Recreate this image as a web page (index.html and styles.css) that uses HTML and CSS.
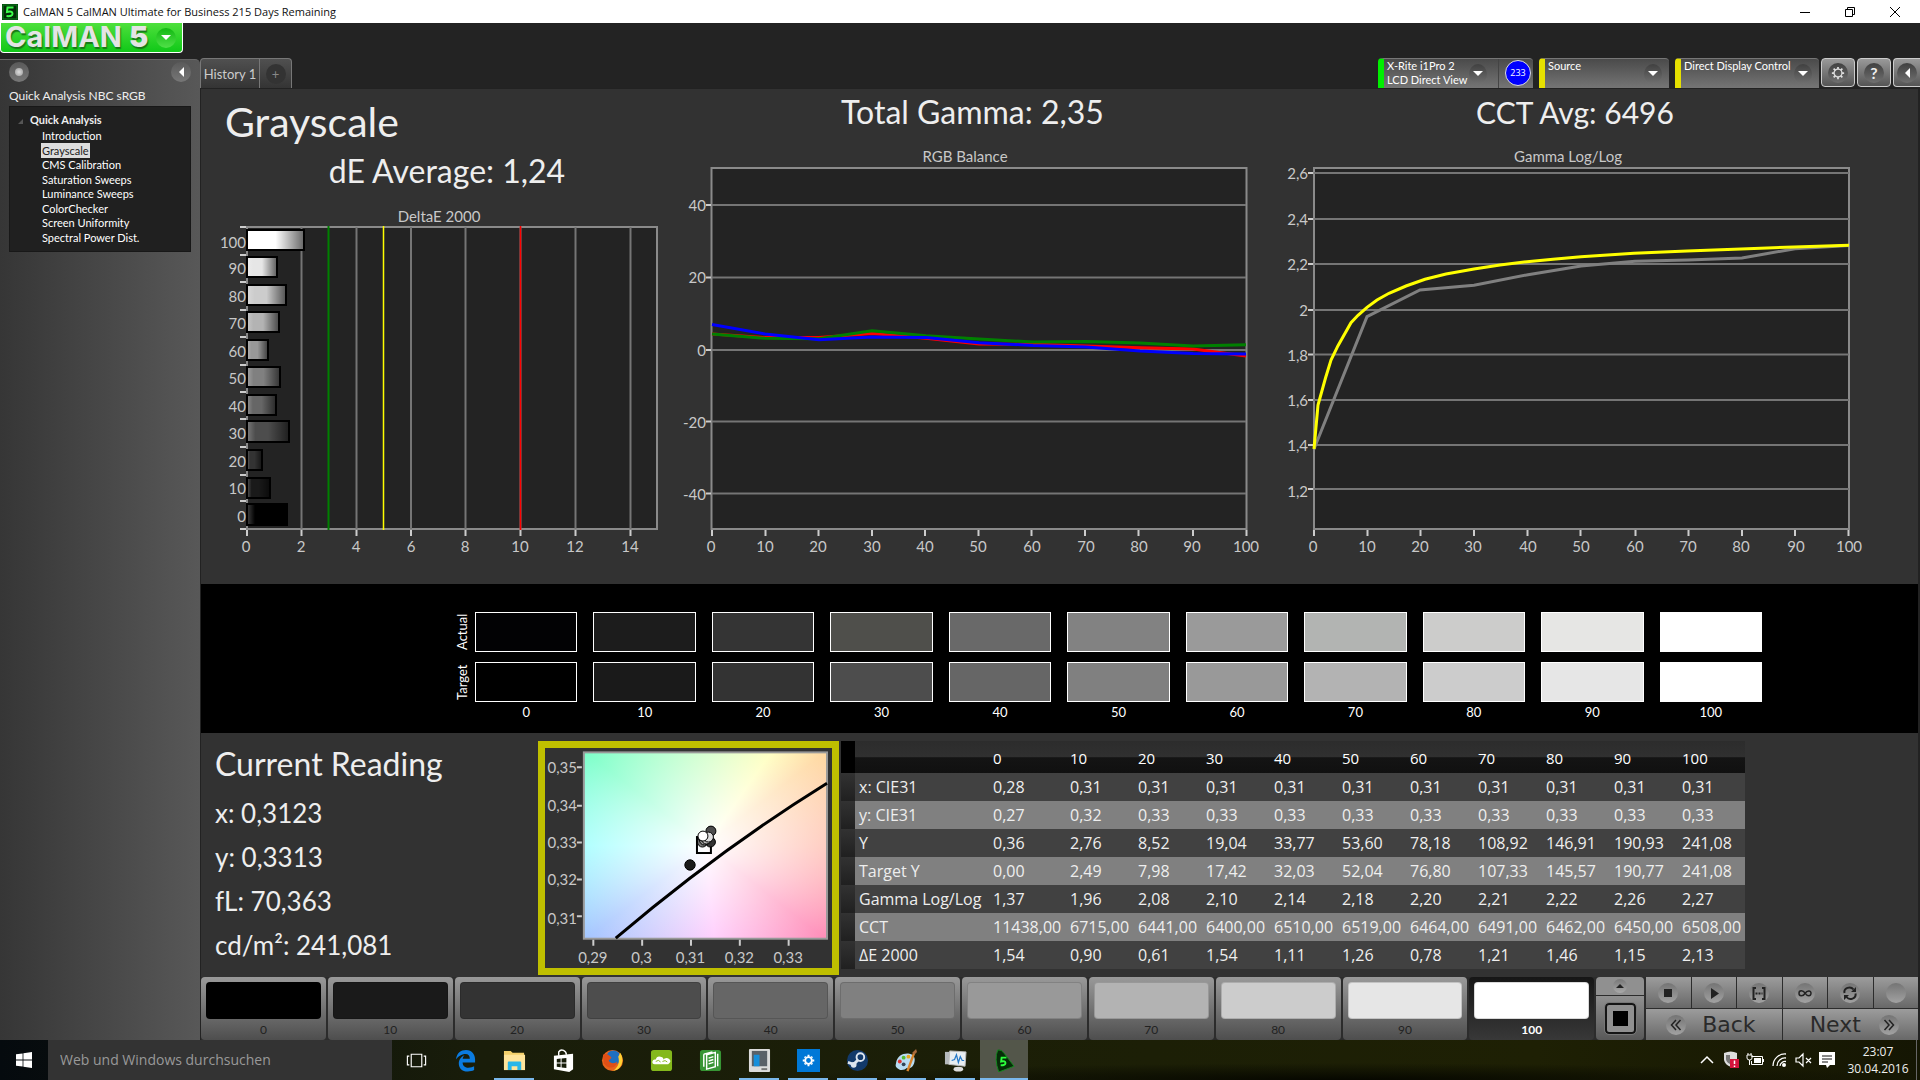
FILE: index.html
```html
<!DOCTYPE html>
<html lang="en">
<head>
<meta charset="utf-8">
<title>CalMAN 5 CalMAN Ultimate for Business</title>
<link rel="stylesheet" href="styles.css">
</head>
<body>
<header class="titlebar">
  <svg class="app-icon" viewBox="0 0 16 16"><rect width="16" height="16" fill="#042c08"/><rect x="1" y="1" width="14" height="14" fill="none" stroke="#0a8a1c" stroke-width="1"/><path d="M11.500 3.500H5.500L5 8Q10.500 6.500 10.500 9.700 10.500 12.700 4.500 12" fill="none" stroke="#3dff4c" stroke-width="2"/></svg>
  <span class="window-title">CalMAN 5 CalMAN Ultimate for Business 215 Days Remaining</span>
  <button class="win-btn" aria-label="Minimize"><svg viewBox="0 0 10 10"><path d="M0 5.500H10" /></svg></button>
  <button class="win-btn" aria-label="Restore"><svg viewBox="0 0 10 10"><path d="M.5 2.500H7.500V9.500H.5ZM2.500 2.500V.5H9.500V7.500H7.500"/></svg></button>
  <button class="win-btn" aria-label="Close"><svg viewBox="0 0 10 10"><path d="M0 0L10 10M10 0L0 10"/></svg></button>
</header>

<div class="app">
  <aside class="left">
    <button class="logo"><span class="logo-text">CalMAN<b>5</b></span><i class="round green"><i class="tri"></i></i></button>
    <nav class="sidebar">
      <div class="side-top"><button class="round big" aria-label="Record"><i class="dot"></i></button><button class="round big" aria-label="Collapse"><i class="tri left-tri"></i></button></div>
      <p class="workflow">Quick Analysis NBC sRGB</p>
      <div class="tree">
        <p class="tree-root">Quick Analysis</p>
        <a href="#">Introduction</a>
        <a href="#" class="current">Grayscale</a>
        <a href="#">CMS Calibration</a>
        <a href="#">Saturation Sweeps</a>
        <a href="#">Luminance Sweeps</a>
        <a href="#">ColorChecker</a>
        <a href="#">Screen Uniformity</a>
        <a href="#">Spectral Power Dist.</a>
      </div>
    </nav>
  </aside>

  <div class="right">
    <div class="toolbar">
      <div class="tabs"><button class="tab">History 1</button><button class="tab add" aria-label="Add tab"><i class="plus">+</i></button></div>
      <div class="devices">
        <div class="device meter"><button class="device-main"><span>X-Rite i1Pro 2<br>LCD Direct View</span><i class="round dark"><i class="tri"></i></i></button><span class="badge">233</span></div>
        <div class="device source"><button class="device-main"><span>Source</span><i class="round dark"><i class="tri"></i></i></button></div>
        <div class="device display"><button class="device-main"><span>Direct Display Control</span><i class="round dark"><i class="tri"></i></i></button></div>
        <button class="tool" aria-label="Settings"><i class="round dark"><svg viewBox="0 0 16 16"><circle cx="8" cy="8" r="4.500" fill="none" stroke="#ddd" stroke-width="1.500"/><path d="M8 1V3.500M8 12.500V15M1 8H3.500M12.500 8H15M3 3L5 5M11 11L13 13M13 3L11 5M5 11L3 13" stroke="#ddd" stroke-width="2"/></svg></i></button>
        <button class="tool" aria-label="Help"><i class="round dark">?</i></button>
        <button class="tool edge" aria-label="Expand"><i class="round dark"><i class="tri left-tri"></i></i></button>
      </div>
    </div>

    <main class="content">
      <section class="charts">
        <div class="chart-panel">
          <h1>Grayscale</h1>
          <h2 class="de-heading">dE Average: 1,24</h2>
          <svg class="chart" viewBox="201 206 480 360">
            <defs>
              <linearGradient id="shade"><stop offset="0" stop-color="#fff" stop-opacity=".25"/><stop offset=".2" stop-color="#fff" stop-opacity="0"/><stop offset=".5" stop-color="#000" stop-opacity="0"/><stop offset="1" stop-color="#000" stop-opacity=".6"/></linearGradient>
            </defs>
            <text x="439" y="222" class="mid">DeltaE 2000</text>
            <rect x="247" y="227" width="410" height="302" class="plot"/>
            <path class="grid" d="M301.500 227V529M356.500 227V529M411 227V529M465.500 227V529M520.500 227V529M575.500 227V529M630.500 227V529"/>
            <path class="tick" d="M240 227H246M240 255H246M240 282H246M240 310H246M240 337H246M240 365H246M240 392H246M240 419H246M240 447H246M240 475H246M240 501H246M240 529H246M247 530V536M301.500 530V536M356.500 530V536M411 530V536M465.500 530V536M520.500 530V536M575.500 530V536M630.500 530V536"/>
            <g class="bars">
              <rect x="247" y="230" width="57" height="20" fill="#fff"/><rect x="247" y="257" width="30" height="20" fill="#e6e6e6"/><rect x="247" y="285" width="39" height="20" fill="#ccc"/><rect x="247" y="312" width="32" height="20" fill="#b3b3b3"/><rect x="247" y="340" width="21" height="20" fill="#999"/><rect x="247" y="367" width="33" height="20" fill="#808080"/><rect x="247" y="395" width="29" height="20" fill="#666"/><rect x="247" y="421" width="42" height="21" fill="#4d4d4d"/><rect x="247" y="450" width="15" height="20" fill="#333"/><rect x="247" y="478" width="23" height="20" fill="#1a1a1a"/><rect x="247" y="504" width="40" height="21" fill="#000"/>
            </g>
            <g class="bars" fill="url(#shade)">
              <rect x="247" y="230" width="57" height="20"/><rect x="247" y="257" width="30" height="20"/><rect x="247" y="285" width="39" height="20"/><rect x="247" y="312" width="32" height="20"/><rect x="247" y="340" width="21" height="20"/><rect x="247" y="367" width="33" height="20"/><rect x="247" y="395" width="29" height="20"/><rect x="247" y="421" width="42" height="21"/><rect x="247" y="450" width="15" height="20"/><rect x="247" y="478" width="23" height="20"/><rect x="247" y="504" width="40" height="21"/>
            </g>
            <path d="M328.500 226V530" stroke="green" stroke-width="2"/><path d="M383.500 226V530" stroke="#ff0" stroke-width="1.500"/><path d="M520.500 226V530" stroke="red" stroke-width="1.500"/>
            <g class="end"><text x="246" y="248">100</text><text x="246" y="274">90</text><text x="246" y="302">80</text><text x="246" y="329">70</text><text x="246" y="357">60</text><text x="246" y="384">50</text><text x="246" y="412">40</text><text x="246" y="439">30</text><text x="246" y="467">20</text><text x="246" y="494">10</text><text x="246" y="522">0</text></g>
            <g class="mid"><text x="246" y="552">0</text><text x="301" y="552">2</text><text x="356" y="552">4</text><text x="411" y="552">6</text><text x="465" y="552">8</text><text x="520" y="552">10</text><text x="575" y="552">12</text><text x="630" y="552">14</text></g>
          </svg>
        </div>

        <div class="chart-panel">
          <h2 class="gamma-heading">Total Gamma: 2,35</h2>
          <svg class="chart" viewBox="681 146 580 420">
            <text x="965" y="162" class="mid">RGB Balance</text>
            <rect x="711.500" y="168" width="535" height="361" class="plot"/>
            <path class="grid" d="M712 205H1246M712 277.500H1246M712 350H1246M712 421.500H1246M712 493.500H1246"/>
            <path class="tick" d="M706 205H711M706 277.500H711M706 350H711M706 421.500H711M706 493.500H711M712 530V536M765.500 530V536M818.500 530V536M872 530V536M925 530V536M978.500 530V536M1031.500 530V536M1085 530V536M1138.500 530V536M1193 530V536M1246.500 530V536"/>
            <g class="series"><polyline stroke="red" points="712,334 765,337.500 819,337.500 872,333.500 926,338.300 979,344 1033,344.300 1086,346 1140,347.700 1193,349 1246,356"/>
            <polyline stroke="green" points="712,334 765,338.300 819,338.700 872,330.700 926,335.700 979,339 1033,342 1086,341.500 1140,343 1193,346 1246,344.700"/>
            <polyline stroke="#00f" points="712,324.500 765,334 819,339.700 872,337 926,337.500 979,342.700 1033,345.500 1086,347 1140,351 1193,353.500 1246,354"/></g>
            <g class="end"><text x="706" y="211">40</text><text x="706" y="283">20</text><text x="706" y="356">0</text><text x="706" y="428">-20</text><text x="706" y="500">-40</text></g>
            <g class="mid"><text x="711" y="552">0</text><text x="765" y="552">10</text><text x="818" y="552">20</text><text x="872" y="552">30</text><text x="925" y="552">40</text><text x="978" y="552">50</text><text x="1032" y="552">60</text><text x="1086" y="552">70</text><text x="1139" y="552">80</text><text x="1192" y="552">90</text><text x="1246" y="552">100</text></g>
          </svg>
        </div>

        <div class="chart-panel">
          <h2 class="cct-heading">CCT Avg: 6496</h2>
          <svg class="chart" viewBox="1261 146 657 420">
            <text x="1568" y="162" class="mid">Gamma Log/Log</text>
            <rect x="1314" y="168" width="535" height="361" class="plot"/>
            <path class="grid" d="M1314 173H1849M1314 219H1849M1314 264H1849M1314 310H1849M1314 354.500H1849M1314 400H1849M1314 445H1849M1314 489H1849"/>
            <path class="tick" d="M1308 173H1313M1308 219H1313M1308 264H1313M1308 310H1313M1308 354.500H1313M1308 400H1313M1308 445H1313M1308 489H1313M1314 530V536M1367.500 530V536M1420.500 530V536M1474 530V536M1527.500 530V536M1580.500 530V536M1635.500 530V536M1688.500 530V536M1742 530V536M1795 530V536M1848.500 530V536"/>
            <g class="series"><polyline stroke="#808080" points="1314,449 1367,316.700 1420,290 1474,285.300 1528,274.700 1581,266 1635,261.300 1688,260 1742,258 1795,248.700 1849,245.500"/>
            <polyline stroke="#ff0" points="1314,449 1316,427 1318,405 1325.500,378 1331,360 1338,345.700 1351,322.700 1358,315.300 1367,307.300 1377,300 1389,293.300 1406,286 1425,279.300 1446,274 1474,269 1500,265 1527,261.700 1553,259.300 1581,256.700 1634,253.300 1687,251 1741,249 1794,247 1849,245.300"/></g>
            <g class="end"><text x="1308" y="179">2,6</text><text x="1308" y="225">2,4</text><text x="1308" y="270">2,2</text><text x="1308" y="316">2</text><text x="1308" y="361">1,8</text><text x="1308" y="406">1,6</text><text x="1308" y="451">1,4</text><text x="1308" y="497">1,2</text></g>
            <g class="mid"><text x="1313" y="552">0</text><text x="1367" y="552">10</text><text x="1420" y="552">20</text><text x="1473" y="552">30</text><text x="1528" y="552">40</text><text x="1581" y="552">50</text><text x="1635" y="552">60</text><text x="1688" y="552">70</text><text x="1741" y="552">80</text><text x="1796" y="552">90</text><text x="1849" y="552">100</text></g>
          </svg>
        </div>
      </section>

      <section class="swatches">
        <div class="swatch-row"><span class="side-label">Actual</span><i style="background:#020204"></i><i style="background:#1c1c1c"></i><i style="background:#343434"></i><i style="background:#4f4f4b"></i><i style="background:#696969"></i><i style="background:#828282"></i><i style="background:#9a9a9a"></i><i style="background:#b2b4b2"></i><i style="background:#cccccb"></i><i style="background:#e6e6e4"></i><i style="background:#fff"></i></div>
        <div class="swatch-row target"><span class="side-label">Target</span><i style="background:#000"></i><i style="background:#1a1a1a"></i><i style="background:#333"></i><i style="background:#4d4d4d"></i><i style="background:#666"></i><i style="background:#808080"></i><i style="background:#999"></i><i style="background:#b3b3b3"></i><i style="background:#ccc"></i><i style="background:#e6e6e6"></i><i style="background:#fff"></i></div>
        <div class="swatch-row labels"><span></span><span>0</span><span>10</span><span>20</span><span>30</span><span>40</span><span>50</span><span>60</span><span>70</span><span>80</span><span>90</span><span>100</span></div>
      </section>

      <section class="readings">
        <div class="current-reading">
          <h2>Current Reading</h2>
          <p>x: 0,3123</p><p>y: 0,3313</p><p>fL: 70,363</p><p>cd/m²: 241,081</p>
        </div>
        <div class="cie">
          <svg viewBox="545 748 288 220">
            <foreignObject x="584" y="752" width="245" height="187"><div class="gamut"></div></foreignObject>
            <rect x="584" y="752" width="244" height="187" fill="none" stroke="#999" stroke-width="2"/>
            <path class="tick" d="M577 767H582M577 805.500H582M577 842.500H582M577 879.500H582M577 916.500H582M593.500 940V946M642.500 940V946M691.500 940V946M740.500 940V946M789.500 940V946"/>
            <path d="M616 938.500Q720 850 828 783" fill="none" stroke="#000" stroke-width="3"/>
            <rect x="697.500" y="837" width="14" height="16" fill="none" stroke="#000" stroke-width="2"/>
            <g stroke="#000" stroke-width="1"><circle cx="690.500" cy="865" r="5.200" fill="#1a1a1a"/><circle cx="711" cy="842" r="5" fill="#333"/><circle cx="703" cy="842" r="5" fill="#777"/><circle cx="705" cy="840" r="5" fill="#999"/><circle cx="711.500" cy="831" r="5" fill="#4d4d4d"/><circle cx="707" cy="839" r="5" fill="#bbb"/><circle cx="709" cy="837" r="5" fill="#ddd"/><circle cx="703.500" cy="836" r="5" fill="#fff"/></g>
            <g class="end"><text x="577" y="773">0,35</text><text x="577" y="811">0,34</text><text x="577" y="848">0,33</text><text x="577" y="885">0,32</text><text x="577" y="924">0,31</text></g>
            <g class="mid"><text x="593" y="963">0,29</text><text x="642" y="963">0,3</text><text x="691" y="963">0,31</text><text x="740" y="963">0,32</text><text x="789" y="963">0,33</text></g>
          </svg>
        </div>
        <table class="data">
          <thead><tr><th class="handle"></th><th class="name"></th><th class="first">0</th><th>10</th><th>20</th><th>30</th><th>40</th><th>50</th><th>60</th><th>70</th><th>80</th><th>90</th><th class="last">100</th></tr></thead>
          <tbody>
            <tr><td class="handle"></td><th>x: CIE31</th><td>0,28</td><td>0,31</td><td>0,31</td><td>0,31</td><td>0,31</td><td>0,31</td><td>0,31</td><td>0,31</td><td>0,31</td><td>0,31</td><td>0,31</td></tr>
            <tr><td class="handle"></td><th>y: CIE31</th><td>0,27</td><td>0,32</td><td>0,33</td><td>0,33</td><td>0,33</td><td>0,33</td><td>0,33</td><td>0,33</td><td>0,33</td><td>0,33</td><td>0,33</td></tr>
            <tr><td class="handle"></td><th>Y</th><td>0,36</td><td>2,76</td><td>8,52</td><td>19,04</td><td>33,77</td><td>53,60</td><td>78,18</td><td>108,92</td><td>146,91</td><td>190,93</td><td>241,08</td></tr>
            <tr><td class="handle"></td><th>Target Y</th><td>0,00</td><td>2,49</td><td>7,98</td><td>17,42</td><td>32,03</td><td>52,04</td><td>76,80</td><td>107,33</td><td>145,57</td><td>190,77</td><td>241,08</td></tr>
            <tr><td class="handle"></td><th>Gamma Log/Log</th><td>1,37</td><td>1,96</td><td>2,08</td><td>2,10</td><td>2,14</td><td>2,18</td><td>2,20</td><td>2,21</td><td>2,22</td><td>2,26</td><td>2,27</td></tr>
            <tr><td class="handle"></td><th>CCT</th><td>11438,00</td><td>6715,00</td><td>6441,00</td><td>6400,00</td><td>6510,00</td><td>6519,00</td><td>6464,00</td><td>6491,00</td><td>6462,00</td><td>6450,00</td><td>6508,00</td></tr>
            <tr><td class="handle"></td><th>ΔE 2000</th><td>1,54</td><td>0,90</td><td>0,61</td><td>1,54</td><td>1,11</td><td>1,26</td><td>0,78</td><td>1,21</td><td>1,46</td><td>1,15</td><td>2,13</td></tr>
          </tbody>
        </table>
      </section>

      <section class="patterns">
        <div class="levels">
          <button class="level"><i style="background:#000"></i>0</button><button class="level"><i style="background:#1a1a1a"></i>10</button><button class="level"><i style="background:#333"></i>20</button><button class="level"><i style="background:#4d4d4d"></i>30</button><button class="level"><i style="background:#666"></i>40</button><button class="level"><i style="background:#808080"></i>50</button><button class="level"><i style="background:#999"></i>60</button><button class="level"><i style="background:#b3b3b3"></i>70</button><button class="level"><i style="background:#ccc"></i>80</button><button class="level"><i style="background:#e6e6e6"></i>90</button><button class="level selected"><i style="background:#fff"></i>100</button>
        </div>
        <div class="window-size">
          <button aria-label="More"><i class="round small"><i class="tri up-tri"></i></i></button>
          <button aria-label="Window pattern"><i class="frame"></i></button>
        </div>
        <div class="controls">
          <button aria-label="Stop"><i class="round ctl"><svg viewBox="0 0 20 20"><path d="M6 6H14V14H6Z" fill="#222"/></svg></i></button>
          <button aria-label="Read"><i class="round ctl"><svg viewBox="0 0 20 20"><path d="M7 5L15 10.500 7 16Z" fill="#222"/></svg></i></button>
          <button aria-label="Read series"><i class="round ctl"><svg viewBox="0 0 20 20"><path d="M7 5H4.500V16H7M13 5H15.500V16H13" fill="none" stroke="#222" stroke-width="2"/><path d="M6.500 10.500H13.500" stroke="#222" stroke-width="2" stroke-dasharray="2 1"/></svg></i></button>
          <button aria-label="Continuous"><i class="round ctl"><svg viewBox="0 0 20 20"><path d="M10 10C8 7 4 7 4 10.300S8 13.500 10 10.500 16 7 16 10.300 12 13.500 10 10" fill="none" stroke="#222" stroke-width="1.500"/></svg></i></button>
          <button aria-label="Refresh"><i class="round ctl"><svg viewBox="0 0 20 20"><path d="M4.500 10A5 4.500 0 0 1 13.500 6.500M15.500 10.500A5 4.500 0 0 1 6.500 14" fill="none" stroke="#222" stroke-width="2"/><path d="M16 4V9H11ZM4 17V12H9Z" fill="#222"/></svg></i></button>
          <button aria-label="Blank"><i class="round ctl"></i></button>
          <button class="wide back"><i class="round ctl"><svg viewBox="0 0 20 20"><path d="M10 5L5.500 10 10 15M14.500 5L10 10 14.500 15" fill="none" stroke="#222" stroke-width="1.500"/></svg></i>Back</button>
          <button class="wide next">Next<i class="round ctl"><svg viewBox="0 0 20 20"><path d="M5.500 5L10 10 5.500 15M10 5L14.500 10 10 15" fill="none" stroke="#222" stroke-width="1.500"/></svg></i></button>
        </div>
      </section>
    </main>
  </div>
</div>

<footer class="taskbar">
  <button class="start" aria-label="Start"><svg viewBox="0 0 16 16"><path d="M0 2.300L6.600 1.400V7.600H0ZM7.400 1.300L16 0V7.600H7.400ZM0 8.400H6.600V14.600L0 13.700ZM7.400 8.400H16V16L7.400 14.700Z" fill="#fff"/></svg></button>
  <input class="search" type="text" placeholder="Web und Windows durchsuchen" aria-label="Web und Windows durchsuchen">
  <div class="tasks">
    <button class="task" aria-label="Task view"><svg viewBox="0 0 24 24"><path d="M6.500 5.500H17.500V18.500H6.500ZM4.500 7.500H2.500V16.500H4.500M19.500 7.500H21.500V16.500H19.500" fill="none" stroke="#fff" stroke-width="1.200"/></svg></button>
    <button class="task" aria-label="Edge"><svg viewBox="0 0 24 24"><path d="M2 11C3 4 7 1 12.500 1 19 1 22 6 22 11V14H9C9 18 12 19.500 15 19.500 17.500 19.500 19.500 18.800 21 18V22C19 23 17 23.500 14.500 23.500 8 23.500 5 19.500 5 15 5 11 7.500 8 11 6.500 9.800 7.500 9.200 9 9 10.300H16.500C16.500 7 15 5.300 12 5.300 8 5.300 4 8 2 11Z" fill="#0b7be0"/></svg></button>
    <button class="task open" aria-label="Explorer"><svg viewBox="0 0 24 24"><path d="M1 2H8L10 4H22V21H1Z" fill="#f3cf6a"/><path d="M1 6H23V22H1Z" fill="#ffe49a"/><path d="M5 22V14Q5 13 6 13H18Q19 13 19 14V22H15V18H9V22Z" fill="#29b6e8"/></svg></button>
    <button class="task" aria-label="Store"><svg viewBox="0 0 24 24"><path d="M2 7L22 5V21L18 24 2 21Z" fill="#fff"/><path d="M7 7V3Q9 0 12 1.500T15 6" fill="none" stroke="#fff" stroke-width="1.500"/><path d="M5 10.500L9 10V14H5ZM10 10L15 9.500V14H10ZM5 15H9V19L5 18.500ZM10 15H15V19.700L10 19.200Z" fill="#151b08"/></svg></button>
    <button class="task" aria-label="Firefox"><svg viewBox="0 0 24 24"><circle cx="12" cy="12" r="11" fill="#e8641b"/><circle cx="13" cy="9" r="7.500" fill="#1f6fc0"/><path d="M20 4C25 11 22 22 12 23 17 20 20 15 18 8Z" fill="#ffcf33"/><path d="M2 6C6 4 9 7 11 9L8 12C10 16 15 15 17 13 16 20 8 22 3 15Z" fill="#e04f16"/></svg></button>
    <button class="task" aria-label="Cloud"><svg viewBox="0 0 24 24"><rect x="1" y="1" width="22" height="22" rx="3" fill="#84b81c"/><path d="M5 16Q2 15.500 2.500 13T6 11Q7 7 11 8T13.500 11Q17 8 20 10.500T19 16Z" fill="#fff"/><path d="M6 13Q9 10.500 11 13.500M13 13Q16 11 18 13.500" fill="none" stroke="#84b81c"/></svg></button>
    <button class="task" aria-label="Documents"><svg viewBox="0 0 24 24"><rect x="1" y="1" width="22" height="22" rx="3" fill="#379534"/><path d="M8 6L17 3.500V18.500L8 21ZM5 5.500V18.500M5 5.500L14 3M19.500 5V18" fill="none" stroke="#fff" stroke-width="1.500"/><path d="M10 9.500L15 8M10 12.500L15 11M10 15.500L15 14" stroke="#fff" stroke-width="1.500"/></svg></button>
    <button class="task open" aria-label="Monitor tool"><svg viewBox="0 0 24 24"><rect x="1" y="0" width="22" height="24" rx="1" fill="#dcdcdc"/><rect x="4" y="2" width="16" height="16" fill="#5a6168"/><rect x="6" y="6" width="6" height="12" fill="#168fdc"/><rect x="14" y="20" width="6" height="2" fill="#777"/></svg></button>
    <button class="task open" aria-label="Settings"><svg viewBox="0 0 24 24"><rect width="24" height="24" fill="#0078d7"/><circle cx="12" cy="12" r="3.500" fill="none" stroke="#fff" stroke-width="2"/><path d="M12 6V8M12 16V18M6 12H8M16 12H18M8 8L9 9M15 15L16 16M16 8L15 9M9 15L8 16" stroke="#fff" stroke-width="2"/></svg></button>
    <button class="task open" aria-label="Steam"><svg viewBox="0 0 24 24"><circle cx="12" cy="12" r="11" fill="#123a6b"/><circle cx="15" cy="8.500" r="4" fill="none" stroke="#dde6f0" stroke-width="2"/><path d="M2 14L8 16 13 11" fill="none" stroke="#dde6f0" stroke-width="3"/><circle cx="8" cy="16.500" r="3" fill="#dde6f0"/></svg></button>
    <button class="task open" aria-label="Paint"><svg viewBox="0 0 24 24"><path d="M1 15C2 7 9 4 15 5S22 12 19 17 13 19 12 20 7 23 4 21 0 18 1 15Z" fill="#b8dcf2"/><circle cx="5" cy="13" r="2" fill="#d33"/><circle cx="9" cy="9" r="2" fill="#5b3"/><circle cx="14" cy="8" r="2" fill="#e8a820"/><circle cx="9" cy="16" r="2" fill="#345"/><path d="M13 23L20 4" stroke="#d8842c" stroke-width="2.500"/><path d="M18 4L22 0 23 3 20 6Z" fill="#a86a3c"/></svg></button>
    <button class="task open" aria-label="Performance"><svg viewBox="0 0 24 24"><path d="M1 3H15V16H1Z" fill="#b5b9bc"/><path d="M6 2L23 3 22 18 5 16Z" fill="#e8eef2" stroke="#bbb"/><path d="M8 12L11 11 13 6 15 14 17 8 19 12H21" fill="none" stroke="#2679c8" stroke-width="1.300"/><ellipse cx="15" cy="21" rx="5" ry="2.500" fill="#ddd"/></svg></button>
    <button class="task open active" aria-label="CalMAN"><svg viewBox="0 0 24 24"><path d="M5 1Q9 0 12 5L22 18 6 24Q1 10 5 1Z" fill="#062c08" stroke="#148a1e"/><path d="M14 9H9L8.500 13Q13 12 13 14.500T8 17" fill="none" stroke="#2cff3c" stroke-width="2"/></svg></button>
  </div>
  <div class="tray">
    <svg viewBox="0 0 20 20"><path d="M4 13L10 7 16 13" fill="none" stroke="#fff" stroke-width="1.500"/></svg>
    <svg viewBox="0 0 20 20"><path d="M3 3Q10 0 16 3V10Q15 15 10 17 4 15 3 10Z" fill="#ddd"/><path d="M5 5H9V14Q5 12 5 9Z" fill="#777"/><rect x="9" y="9" width="9" height="9" fill="#d4143c"/><path d="M13.500 10.500V14M13.500 15.500V17" stroke="#fff" stroke-width="1.500"/></svg>
    <svg viewBox="0 0 20 20"><path d="M6.500 6.500H17.500V14.500H6.500V11M18.500 9V12" fill="none" stroke="#fff"/><path d="M9 8H16V13H9Z" fill="#fff"/><path d="M2 5H7V8Q7 10 4.500 10T2 8ZM3 3V5M6 3V5M4.500 10V15" fill="none" stroke="#fff"/></svg>
    <svg viewBox="0 0 20 20"><path d="M4 16A12 12 0 0 1 17 4M8 16A8 8 0 0 1 17 8M11 16A5 5 0 0 1 17 11.500" fill="none" stroke="#fff" stroke-width="1.300"/><circle cx="15" cy="15" r="2" fill="#fff"/></svg>
    <svg viewBox="0 0 20 20"><path d="M3 8H6L10 4V16L6 12H3ZM13 8L18 13M18 8L13 13" fill="none" stroke="#fff" stroke-width="1.200"/></svg>
    <svg viewBox="0 0 20 20"><path d="M2 2H18V15H13L10 18 9 15H2Z" fill="#fff"/><path d="M5 6H15M5 9H15M5 12H11" stroke="#111"/></svg>
    <div class="clock">23:07<br>30.04.2016</div>
  </div>
</footer>
</body>
</html>
```
FILE: styles.css
```css
* { box-sizing: border-box; }
body { margin: 0; min-height: 100vh; display: flex; flex-direction: column; background: #232323; color: #eee; font: 14px/16px Lato, sans-serif; }
h1, h2, p { margin: 0; font-weight: 400; }
button { margin: 0; padding: 0; border: 0; background: none; color: inherit; font: inherit; }
i { font-style: normal; }
svg { display: block; }

.titlebar { display: flex; align-items: center; height: 23px; background: #fff; color: #111; padding-left: 2px; }
.app-icon { width: 16px; height: 16px; margin-right: 5px; }
.window-title { flex: 1; font: 11px/16px "Open Sans", sans-serif; }
.win-btn { width: 45px; height: 20px; display: grid; place-items: center; }
.win-btn svg { width: 10px; height: 10px; fill: none; stroke: #000; }
.titlebar .win-btn:last-child { margin-right: 3px; }

.app { flex: 1; display: flex; }
.left { width: 200px; flex: none; display: flex; flex-direction: column; }
.right { flex: 1; min-width: 0; display: flex; flex-direction: column; }

.logo { display: flex; align-items: center; justify-content: space-between; width: 183px; height: 30px; margin-bottom: 6px; padding: 0 6px 0 4px; border: solid #fff; border-width: 0 1px 1px; border-radius: 0 0 4px 4px; background: linear-gradient(#4ee03c, #10c818); }
.logo-text { font: 700 29px/26px Inter, sans-serif; height: 28px; color: #e4e4e4; text-shadow: 1px 2px 1px #187818; }
.logo-text b { margin-left: 7px; }

.round { display: grid; place-items: center; width: 20px; height: 20px; border-radius: 50%; background: linear-gradient(#4a4a4a, #6e6e6e); }
.round.big { background: linear-gradient(#5a5a5a, #777); }
.round.green { background: linear-gradient(#12b812, #50e048); }
.round.dark { background: linear-gradient(#404040, #707070); }
.round.small { width: 14px; height: 14px; background: linear-gradient(#777, #aaa); }
.round.ctl { background: linear-gradient(#747474, #a2a2a2); }
.round svg { width: 20px; height: 20px; }
.tri { border: 5px solid transparent; border-top-color: #fff; border-bottom: 0; }
.left-tri { border: 5px solid transparent; border-right-color: #fff; border-left: 0; }
.up-tri { border: 4px solid transparent; border-bottom-color: #222; border-top: 0; }
.dot { width: 8px; height: 8px; border-radius: 50%; background: radial-gradient(#ddd, #999); }

.sidebar { flex: 1; padding: 2px 9px; border-radius: 0 5px 0 0; background: linear-gradient(90deg, #363636, #585858); border-top: 1px solid #666; }
.side-top { display: flex; justify-content: space-between; }
.workflow { margin-top: 5px; line-height: 18px; font-size: 12px; }
.tree { margin-top: 1px; height: 146px; padding: 4px 0 0 33px; background: #202020; border: 1px solid #181818; font-size: 11px; }
.tree-root { margin-left: -13px; line-height: 18px; font-size: 11px; font-weight: 700; }
.tree-root::before { content: ""; display: inline-block; margin: 0 7px 0 -12px; border: solid transparent; border-width: 0 0 5px 5px; border-bottom-color: #555; }
.tree a { display: block; width: max-content; margin-left: -2px; padding: 0 1px; line-height: 15px; color: #fff; text-decoration: none; }
.tree a:nth-child(even) { line-height: 14px; }
.tree a.current { background: #ddd; color: #222; }

.toolbar { height: 65px; display: flex; justify-content: space-between; align-items: flex-end; }
.tabs { display: flex; height: 30px; border: 1px solid #777; border-bottom: 0; border-radius: 4px 4px 0 0; background: linear-gradient(#505050, #343434); }
.tab { width: 58px; color: #ccc; font-size: 13px; }
.tab.add { width: 32px; display: grid; place-items: center; border-left: 1px solid #777; }
.plus { width: 20px; height: 20px; border-radius: 50%; background: #333; color: #888; line-height: 20px; }
.devices { display: flex; height: 30px; }
.device { display: flex; margin-right: 6px; border-left: 6px solid #e6e000; border-top: 1px solid #777; border-radius: 4px 4px 0 0; background: linear-gradient(#4a4a4a, #757575); }
.device.meter { width: 155px; border-left-color: #0e0; }
.device.source { width: 130px; }
.device.display { width: 144px; margin-right: 0; }
.device-main { flex: 1; display: flex; justify-content: space-between; align-items: center; padding: 0 7px 0 3px; text-align: left; white-space: nowrap; font-size: 11px; line-height: 14px; color: #fff; }
.device-main span { align-self: flex-start; }
.device .round { width: 18px; flex: none; }
.meter .device-main { padding-right: 11px; border-right: 1px solid #444; }
.badge { width: 26px; height: 26px; margin: 1px 2px 1px 6px; border: 1px solid #ddd; border-radius: 50%; background: #00f; color: #fff; font: 9px/24px "Open Sans", sans-serif; text-align: center; }
.tool { width: 34px; height: 29px; margin-left: 2px; display: grid; place-items: center; border: 1px solid #ccc; border-radius: 4px; background: linear-gradient(#999, #555); font-weight: 700; font-size: 16px; }
.tool svg { width: 14px; height: 14px; }
.tool.edge { width: 27px; border-right: 0; border-radius: 4px 0 0 4px; }

.content { flex: 1; display: flex; flex-direction: column; border: solid #222; border-width: 1px 2px 0 1px; background: #323232; }
.charts { flex: 1; display: grid; grid-template-columns: 480fr 580fr 657fr; }
.chart-panel { display: flex; flex-direction: column; padding-bottom: 18px; }
.chart { width: 100%; margin-top: auto; }
.chart text, .cie text { fill: #c8c8c8; font: 15px Lato, sans-serif; }
.mid { text-anchor: middle; }
.end { text-anchor: end; }
h1 { margin: 7px 0 0 24px; font-size: 41px; line-height: 52px; }
h2 { font-size: 32px; line-height: 40px; text-align: center; }
.de-heading { margin: 3px 0 0 12px; }
.gamma-heading { margin: 3px 0 0 3px; }
.cct-heading { margin: 3px 29px 0 0; font-size: 30px; }
.plot { fill: #232323; stroke: #8a8a8a; stroke-width: 2; }
.grid { fill: none; stroke: #757575; stroke-width: 2; }
.tick { fill: none; stroke: #ccc; stroke-width: 2; }
.bars rect { stroke: #000; stroke-width: 2; }
.series { fill: none; stroke-width: 3; }

.swatches { height: 149px; background: #000; padding: 28px 156px 0 252px; }
.swatch-row { display: grid; grid-template-columns: 6px repeat(11, 1fr); column-gap: 16px; height: 40px; margin-bottom: 10px; }
.swatch-row i { border: 1px solid #fff; }
.swatch-row.target { margin-bottom: 0; }
.side-label { writing-mode: vertical-rl; transform: rotate(180deg); width: 18px; line-height: 18px; text-align: center; font-size: 13px; color: #fff; }
.swatch-row.labels { height: 20px; margin: 0; font-size: 13px; line-height: 20px; text-align: center; color: #fff; }

.readings { height: 244px; display: flex; align-items: flex-start; padding-top: 8px; }
.current-reading { width: 337px; padding-left: 14px; font-size: 26px; }
.current-reading h2 { text-align: left; line-height: 46px; margin-bottom: 4px; }
.current-reading p { line-height: 44px; }
.cie { flex: none; width: 301px; height: 234px; margin-right: 2px; border: 7px solid #bfbf00; }
.cie svg { width: 287px; height: 220px; }
.gamut { height: 100%; background: radial-gradient(farthest-corner, #fff, rgba(255, 255, 255, 0)), conic-gradient(#c8ffbe, #ffffb4 35deg, #ffd8a0 52deg, #ffb8a8 90deg, #ff8cb8 128deg, #ffbcfc 175deg, #a4c4ff 232deg, #90ffff 270deg, #7cffc8 308deg, #c8ffbe); }
.data { flex: none; width: 904px; table-layout: fixed; border-collapse: collapse; font: 16px/28px "Open Sans", sans-serif; color: #eee; }
.data th, .data td { height: 28px; padding: 0; text-align: left; font-weight: 400; white-space: nowrap; }
.data thead th { width: 68px; height: 32px; padding-top: 1px; background: linear-gradient(#2c2c2c, #303030 50%, #141414 52%, #101010); font-size: 15px; color: #fff; }
.data thead .handle { width: 14px; background: #000; }
.data thead .name { width: 138px; }
.data thead .first { width: 77px; }
.data thead .last { width: 63px; }
.data tbody th { padding-left: 4px; }
.data tbody tr { background: #414141; }
.data tbody tr:nth-child(even) { background: #808080; }
.data tbody .handle { background: linear-gradient(#323232, #202020); }

.patterns { height: 63px; display: flex; gap: 2px; background: #2c2c2c; }
.levels { flex: 1394; display: grid; grid-template-columns: repeat(11, 1fr); gap: 2px; }
.level { display: flex; flex-direction: column; align-items: center; padding: 5px 5px 0; border-radius: 4px; background: linear-gradient(#999, #4e4e4e); color: #222; font-size: 12px; line-height: 20px; }
.level i { flex: none; height: 37px; margin-bottom: 1px; width: 100%; border-radius: 4px; border: 1px solid rgba(0, 0, 0, .15); }
.level.selected { background: linear-gradient(#161616, #383838); color: #fff; font-weight: 700; }
.window-size { flex: 48; display: flex; flex-direction: column; gap: 1px; }
.window-size button { display: grid; place-items: center; height: 18px; border-radius: 4px 4px 0 0; background: #909090; }
.window-size button + button { flex: 1; border-radius: 0 0 4px 4px; background: linear-gradient(#909090, #585858); }
.frame { width: 31px; height: 31px; border: 2px solid #151515; border-radius: 4px; outline: 1px solid #777; background: linear-gradient(#000, #000) center / 15px 15px no-repeat #909090; }
.controls { flex: 272; display: grid; grid-template-columns: repeat(6, 1fr); grid-template-rows: 31px 31px; gap: 1px; }
.controls button { display: flex; align-items: center; justify-content: center; background: linear-gradient(#9c9c9c, #686868); }
.controls .wide { grid-column: span 3; gap: 16px; font: 22px/28px "DejaVu Sans", sans-serif; color: #2a2a2a; }
.controls .back { padding-right: 6px; }
.controls .next { gap: 18px; padding-left: 8px; }

.taskbar { height: 40px; display: flex; background: radial-gradient(ellipse at 70% 100%, #060700, rgba(8, 9, 0, 0) 30%), linear-gradient(90deg, #050a0e, #191d0a 25%, #1c1f06 60%, #1e2004 80%, #151603); font: 15px/20px "Open Sans", sans-serif; }
.start { width: 48px; display: grid; place-items: center; }
.start svg { width: 16px; height: 16px; }
.search { width: 344px; border: 0; padding: 0 12px; background: #333; font: 14px/20px "Open Sans", sans-serif; }
.search::placeholder { color: #999; opacity: 1; }
.tasks { display: flex; flex: 1; gap: 1px; }
.task { width: 48px; display: grid; place-items: center; }
.task svg { width: 23px; height: 23px; }
.task.open { background: linear-gradient(#7ab8ec, #7ab8ec) bottom / 40px 2px no-repeat; }
.task.active { background: linear-gradient(#7ab8ec, #7ab8ec) bottom / 48px 2px no-repeat, #53564a; }
.tray { display: flex; align-items: center; gap: 4px; padding-right: 1px; border-right: 1px solid #666; margin-right: 3px; }
.tray svg { width: 20px; height: 20px; }
.clock { width: 74px; font-size: 12px; line-height: 17px; text-align: center; }
```
